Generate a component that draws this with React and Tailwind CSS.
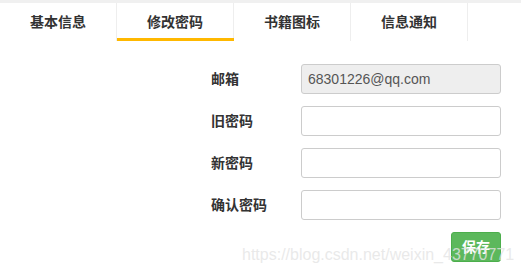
import React from "react";

const tabs = ["基本信息", "修改密码", "书籍图标", "信息通知"];

function Row({ label, children }) {
  return (
    <div className="flex items-center h-[30px]">
      <div className="w-[90px] text-[14px] font-bold text-[#333]">{label}</div>
      {children}
    </div>
  );
}

export default function App() {
  return (
    <div className="relative w-[521px] h-[272px] bg-white overflow-hidden font-['Liberation_Sans','Noto_Sans_CJK_SC',sans-serif]">
      <div className="h-[3px] bg-[#f0f0f0]" />
      <div className="flex h-[38px]">
        {tabs.map((t, i) => (
          <div
            key={t}
            className="relative w-[117px] border-r border-[#eeeeee] flex items-center justify-center text-[14px] font-bold text-[#333]"
          >
            {t}
            {i === 1 && (
              <span className="absolute left-0 -right-px bottom-0 h-[3px] bg-[#ffb800]" />
            )}
          </div>
        ))}
      </div>
      <div className="pl-[211px] pt-[23px] flex flex-col gap-[12px]">
        <Row label="邮箱">
          <div className="w-[200px] h-[30px] border border-[#cccccc] rounded-[3px] bg-[#eeeeee] flex items-center px-[6px] text-[14px] text-[#555]">
            68301226@qq.com
          </div>
        </Row>
        <Row label="旧密码">
          <div className="w-[200px] h-[30px] border border-[#cccccc] rounded-[3px] bg-white" />
        </Row>
        <Row label="新密码">
          <div className="w-[200px] h-[30px] border border-[#cccccc] rounded-[3px] bg-white" />
        </Row>
        <Row label="确认密码">
          <div className="w-[200px] h-[30px] border border-[#cccccc] rounded-[3px] bg-white" />
        </Row>
        <div className="flex pl-[90px] w-[290px] justify-end">
          <button className="w-[50px] h-[30px] rounded-[3px] bg-[#5cb85c] border border-[#4cae4c] text-white text-[14px] font-bold flex items-center justify-center">
            保存
          </button>
        </div>
      </div>
      <div className="absolute left-[242px] top-[246px] text-[16px] leading-[18px] text-[#e4e4e4]/80 whitespace-nowrap font-['Liberation_Sans',sans-serif] pointer-events-none">
        https://blog.csdn.net/weixin_43770771
      </div>
    </div>
  );
}
